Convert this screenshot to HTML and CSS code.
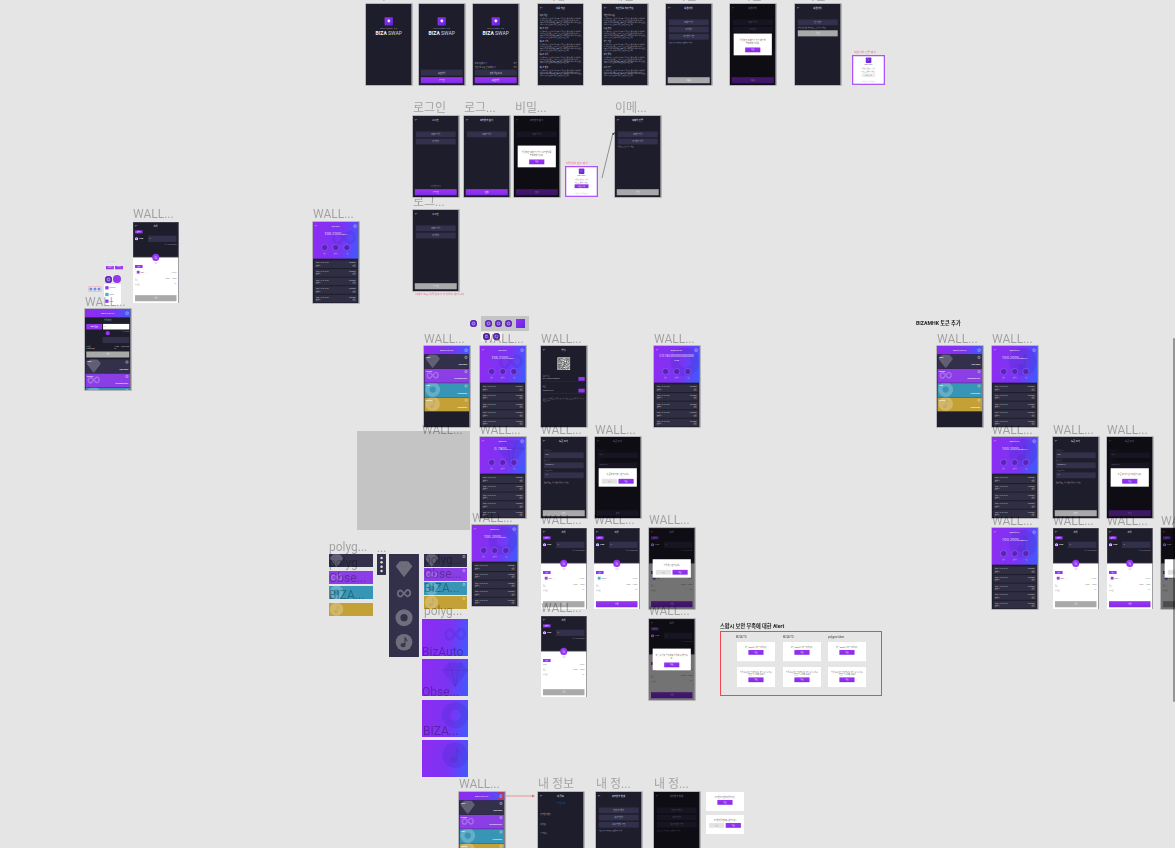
FILE: index.html
```html
<!DOCTYPE html>
<html lang="ko">
<head>
    <meta charset="UTF-8">
    <title>BIZA SWAP - Figma</title>
    <link rel="stylesheet" href="styles.css">
</head>
<body>
    <div class="canvas" id="canvas"></div>
    <div class="scrollbar"></div>
    <script src="script.js"></script>
</body>
</html>
```

FILE: styles.css
```css
* {
    box-sizing: border-box;
}
html, body {
    margin: 0;
    height: 100%;
    overflow: hidden;
    background: #e5e5e5;
}
body {
    font-family: Roboto, "Noto Sans CJK KR", sans-serif;
}
.canvas {
    position: relative;
    width: 1175px;
    height: 848px;
    overflow: hidden;
    filter: blur(0.3px);
}
.scrollbar {
    position: absolute;
    top: 338px;
    right: 0;
    width: 2px;
    height: 364px;
    border-radius: 1px;
    background: rgba(0, 0, 0, 0.35);
}

/* canvas items */
.frame {
    position: absolute;
    overflow: hidden;
}
.phone {
    box-shadow: 0 0 0 0.6px rgba(95, 95, 110, 0.6);
}
.phone.open {
    box-shadow: none;
}
.screen {
    position: relative;
    display: flex;
    flex-direction: column;
    overflow: hidden;
    transform: scale(0.1264);
    transform-origin: 0 0;
    font-size: 20px;
    color: #fff;
}
.label {
    position: absolute;
    font-size: 12px;
    line-height: 14px;
    white-space: nowrap;
    color: rgba(0, 0, 0, 0.3);
}
.note {
    position: absolute;
    white-space: nowrap;
    font-size: 2.4px;
    line-height: 3px;
    color: #555;
}
.note.pink {
    color: #ef6f8d;
    font-size: 2.8px;
}
.note.title {
    font-weight: 700;
    color: #222;
    font-size: 5.2px;
    line-height: 7px;
}
.note.sub {
    color: #444;
    font-size: 2.6px;
}
.redbox {
    position: absolute;
    left: 720px;
    top: 631px;
    width: 162px;
    height: 65px;
    border: 1px solid #f0484e;
}
.plain {
    position: absolute;
}
.grey-rect {
    background: #c4c4c4;
}
.toolbar {
    position: absolute;
    display: flex;
    align-items: center;
    gap: 3px;
}
.toolbar.grey {
    left: 481px;
    top: 316px;
    width: 48px;
    height: 15px;
    padding-left: 4px;
    background: #c4c4c4;
}
.toolbar.white {
    left: 481px;
    top: 332px;
    width: 21px;
    height: 9px;
    padding-left: 2px;
    background: #f2f2f2;
}
.dot {
    display: block;
    flex: none;
    width: 7px;
    height: 7px;
    border-radius: 50%;
    background: #7a33e0;
    box-shadow: inset 0 0 0 1.5px #5b27ad, inset 0 0 0 2.5px #a98af0;
}
.dot.big {
    width: 8px;
    height: 8px;
    background: #9435ef;
    box-shadow: none;
}
.dot.solo {
    position: absolute;
    left: 470px;
    top: 320px;
}
.dot.at {
    position: absolute;
}
.logo-square {
    display: block;
    flex: none;
    width: 9px;
    height: 9px;
    margin-left: 1px;
    background: linear-gradient(135deg, #9c2ff0, #5a2be0);
}
.canvas-lines {
    position: absolute;
    left: 0;
    top: 0;
    width: 1175px;
    height: 848px;
    pointer-events: none;
}

/* screen parts */
.dark {
    background: #1e1d2b;
}
.head {
    display: flex;
    flex: none;
    align-items: center;
    justify-content: space-between;
    height: 66px;
    padding: 0 16px;
    font-size: 18px;
    font-weight: 500;
    color: #dedde6;
}
.head.grad {
    background: linear-gradient(95deg, #8f2cf0, #7b34f4 60%, #3c5cff);
}
.head .gear {
    display: block;
    width: 22px;
    height: 22px;
    border: 4px solid #dcd6ff;
    border-radius: 5px;
}
.head .none {
    width: 22px;
}
.welcome {
    display: flex;
    flex-direction: column;
    align-items: center;
    padding-top: 105px;
}
.logo {
    display: flex;
    align-items: center;
    justify-content: center;
    width: 66px;
    height: 66px;
    border-radius: 6px;
    background: linear-gradient(135deg, #a32bee, #4f2bdd);
    font-size: 32px;
}
.welcome-to {
    margin-top: 16px;
    font-size: 15px;
    letter-spacing: 4px;
    color: #b5b4c2;
}
.brand {
    margin-top: 4px;
    font-size: 40px;
    line-height: 46px;
    font-weight: 400;
    white-space: nowrap;
    color: #d5d4de;
}
.brand b {
    font-weight: 700;
    color: #f2f2f2;
}
.bottom {
    display: flex;
    flex-direction: column;
    gap: 12px;
    width: 100%;
    margin-top: auto;
    padding: 0 14px 14px;
}
.btn {
    display: flex;
    flex: none;
    align-items: center;
    justify-content: center;
    height: 48px;
    font-size: 16px;
    background: #32304a;
    color: #dcdbe4;
}
.btn.purple {
    background: linear-gradient(180deg, #a032f2, #7c2fe8);
    color: #fff;
}
.btn.gray {
    background: #a9a9a9;
    color: #eee;
}
.btn.deep {
    background: #8a35dd;
}
.check {
    display: flex;
    justify-content: space-between;
    font-size: 14px;
    color: #bbb;
}
.check i {
    font-style: normal;
    color: #9f5cff;
}
.terms {
    padding: 0 14px;
    font-size: 11px;
    line-height: 15px;
    color: #b9b8c4;
}
.terms h4 {
    margin: 14px 0 8px;
    font-size: 15px;
    font-weight: 400;
    line-height: 20px;
    color: #dedde6;
}
.terms p {
    margin: 0;
}
.form {
    display: flex;
    flex-direction: column;
    gap: 11px;
    padding: 56px 22px 0;
}
.form.tight {
    padding-top: 34px;
}
.field {
    height: 46px;
    padding-top: 10px;
    font-size: 15px;
    text-align: center;
    background: #32304a;
    color: #b7b6c4;
}
.field.left {
    padding-left: 14px;
    text-align: left;
}
.field-label {
    margin-bottom: -6px;
    font-size: 12px;
    color: #7d7c8c;
}
.form-note {
    font-size: 13px;
    line-height: 18px;
    color: #aaa9b6;
}
.form-note.mark {
    margin-top: 14px;
}
.forgot {
    font-size: 14px;
    text-align: center;
    color: #7d7c8c;
}

/* dim + modal */
.dim {
    position: absolute;
    inset: 0;
    display: flex;
    align-items: center;
    justify-content: center;
    background: rgba(0, 0, 0, 0.55);
}
.modal {
    display: flex;
    flex-direction: column;
    align-items: center;
    gap: 20px;
    width: 302px;
    padding: 38px 20px 24px;
    background: #fff;
    font-size: 16px;
    line-height: 26px;
    text-align: center;
    color: #555;
}
.modal.fill {
    width: 100%;
    height: 100%;
    padding: 30px 20px 0;
    gap: 14px;
    font-size: 14px;
    line-height: 19px;
}
.modal-btns {
    display: flex;
    justify-content: center;
    gap: 12px;
    width: 100%;
}
.btn.small {
    flex: 0 1 120px;
    height: 38px;
    width: 120px;
    font-size: 13px;
}
.btn.light {
    background: #e3e3e3;
    color: #999;
}

/* wallet list */
.tokens {
    display: flex;
    flex-direction: column;
    gap: 3px;
    padding: 2px 4px;
}
.tokens.below {
    padding-top: 14px;
}
.token {
    position: relative;
    flex: none;
    height: 110px;
    padding: 12px 12px;
    overflow: hidden;
    font-size: 14px;
    font-weight: 500;
    background: #32304a;
}
.token.purple {
    background: #8b3ee6;
}
.token.teal {
    background: #3795b5;
}
.token.gold {
    background: #c3a137;
}
.token .art {
    position: absolute;
    left: 0;
    top: -14px;
    width: 130px;
    height: 130px;
}
.token .corner {
    position: absolute;
    right: 14px;
    top: 12px;
    width: 20px;
    height: 20px;
    border: 4px solid #e2e2e2;
    border-radius: 5px;
}
.token .amount {
    position: absolute;
    right: 14px;
    bottom: 24px;
    font-size: 14px;
}
.art {
    color: rgba(255, 255, 255, 0.24);
}
.art .inner {
    fill: rgba(0, 0, 0, 0.06);
}
.strip .art .inner {
    fill: #3a3948;
}

/* token detail */
.hero {
    position: relative;
    flex: none;
    height: 290px;
    overflow: hidden;
    background: linear-gradient(100deg, #8d2cf1, #7a34f4 60%, #3c5cff);
}
.hero .head {
    position: relative;
}
.hero .art {
    position: absolute;
    right: -10px;
    top: 0;
    width: 250px;
    height: 250px;
    color: rgba(60, 40, 190, 0.2);
}
.balance {
    position: relative;
    margin-top: 10px;
    font-size: 32px;
    font-weight: 400;
    white-space: nowrap;
    text-align: center;
    color: #e5dcff;
}
.balance small {
    font-size: 16px;
}
.balance.long {
    margin: 0 16px;
    white-space: normal;
    word-break: break-all;
    font-size: 22px;
    line-height: 28px;
}
.hero-btns {
    position: absolute;
    left: 0;
    right: 0;
    top: 176px;
    display: flex;
    justify-content: center;
    gap: 36px;
}
.hero-btn {
    width: 52px;
    font-size: 12px;
    text-align: center;
    color: #d9ccff;
}
.hero-btn i {
    display: block;
    width: 52px;
    height: 52px;
    margin-bottom: 8px;
    border: 3px solid #a88cff;
    border-radius: 50%;
    background: #5a22b8;
}
.rows {
    display: flex;
    flex-direction: column;
    gap: 8px;
    padding: 14px 10px;
}
.row {
    display: flex;
    flex: none;
    justify-content: space-between;
    height: 60px;
    padding: 9px 14px;
    font-size: 13px;
    line-height: 20px;
    background: #2f2e42;
    color: #cfced8;
}
.row div:last-child {
    text-align: right;
}

/* send */
.send-top {
    flex: none;
    height: 280px;
    box-shadow: inset 0 0 0 5px rgba(110, 110, 125, 0.55);
}
.send-body-top {
    padding: 0 16px;
}
.pill {
    display: block;
    width: 60px;
    height: 24px;
    font-size: 12px;
    line-height: 24px;
    text-align: center;
    background: #9435ef;
    color: #fff;
}
.send-row {
    display: flex;
    align-items: center;
    gap: 10px;
    margin-top: 18px;
    font-size: 14px;
}
.send-row i {
    display: block;
    width: 24px;
    height: 24px;
    border-radius: 50%;
    background: #9435ef;
    box-shadow: inset 0 0 0 7px #e9dcff;
}
.send-row .field {
    flex: 1;
    margin-left: 28px;
    height: 50px;
    padding-top: 14px;
}
.send-hint {
    margin-top: 8px;
    font-size: 11px;
    text-align: right;
    color: #8d8c9c;
}
.send-low {
    position: relative;
    display: flex;
    flex: 1;
    flex-direction: column;
    padding: 60px 16px 14px;
    background: #fff;
    color: #777;
    font-size: 13px;
}
.swap-circle {
    position: absolute;
    left: 50%;
    top: -28px;
    display: flex;
    align-items: center;
    justify-content: center;
    width: 56px;
    height: 56px;
    margin-left: -28px;
    border-radius: 50%;
    font-size: 24px;
    background: #9435ef;
    color: #fff;
}
.swap-name {
    position: absolute;
    left: 0;
    right: 0;
    top: 32px;
    text-align: center;
    font-size: 13px;
}
.pick {
    display: flex;
    align-items: center;
    justify-content: space-between;
    margin: 12px 0 22px;
    color: #999;
}
.pick b {
    display: flex;
    align-items: center;
    gap: 8px;
    padding: 8px 12px;
    font-weight: 500;
    border: 2px solid #eee;
    color: #777;
}
.pick b i {
    display: block;
    width: 22px;
    height: 22px;
    background: #8e3ee8;
}
.pick b i.teal {
    background: #3fb4c8;
}
.kv {
    display: flex;
    justify-content: space-between;
    margin-bottom: 22px;
    color: #888;
}
.send-low .btn {
    margin-top: auto;
}

/* qr */
.qr {
    display: block;
    flex: none;
    width: 100px;
    height: 100px;
    margin: 24px auto 30px;
    background: #fff;
}
.recv {
    display: flex;
    flex-direction: column;
    gap: 6px;
    padding: 0 14px 30px;
    font-size: 13px;
    color: #b7b6c4;
}
.recv-line {
    display: flex;
    align-items: center;
    justify-content: space-between;
    padding-bottom: 6px;
    border-bottom: 2px solid #44434f;
    font-size: 12px;
}
.recv-line span {
    width: 50px;
    height: 30px;
    background: #9435ef;
}
.recv-note {
    padding: 0 14px;
    font-size: 12px;
    line-height: 16px;
    color: #999;
}

/* my info */
.info {
    padding: 0 18px;
    font-size: 14px;
    color: #b7b6c4;
}
.info-top {
    padding: 16px 0 62px;
    text-align: center;
    color: #3a7ab0;
}
.info-row {
    display: flex;
    justify-content: space-between;
    height: 78px;
}

/* mail + alert cards */
.mail {
    align-items: center;
    padding: 10px 14px;
    background: #fff;
    border: 10px solid #a855f7;
    color: #777;
    font-size: 13px;
    line-height: 17px;
    text-align: center;
}
.mail .logo {
    flex: none;
    width: 44px;
    height: 44px;
    font-size: 20px;
}
.mail .mail-name {
    margin: 4px 0 16px;
    font-size: 12px;
    font-weight: 700;
}
.mail .btn {
    width: 110px;
    height: 30px;
    margin-top: 10px;
    font-size: 12px;
}
.mail .mail-foot {
    margin-top: auto;
    font-size: 10px;
    line-height: 12px;
    color: #bbb;
}
.mail.light .btn {
    background: #eee;
    color: #777;
}

/* standalone token art */
.card-art {
    position: relative;
    height: 100%;
    padding: 0;
    background: #32304a;
    overflow: hidden;
}
.card-art.purple {
    background: #8b3ee6;
}
.card-art.teal {
    background: #3795b5;
}
.card-art.gold {
    background: #c3a137;
}
.card-art .art {
    position: absolute;
    left: 0;
    top: -10px;
    width: 120px;
    height: 120px;
}
.card-art .corner {
    position: absolute;
    right: 14px;
    top: 10px;
    width: 20px;
    height: 20px;
    border: 4px solid #e2e2e2;
    border-radius: 5px;
}
.banner {
    position: relative;
    height: 100%;
    overflow: hidden;
    background: linear-gradient(100deg, #8d2cf1, #7a34f4 60%, #3c5cff);
}
.banner .art {
    position: absolute;
    right: -14px;
    top: 6px;
    width: 230px;
    height: 230px;
    color: rgba(60, 40, 190, 0.22);
}
.strip {
    display: flex;
    flex-direction: column;
    align-items: center;
    justify-content: space-around;
    height: 100%;
    padding: 20px 0;
    background: #32304a;
}
.strip .art {
    width: 150px;
    height: 150px;
    color: #6f6e7c;
}
.mini-strip {
    display: flex;
    flex-direction: column;
    align-items: center;
    justify-content: space-around;
    height: 100%;
    padding: 14px 0;
    background: #32304a;
}
.mini-strip i {
    display: block;
    width: 20px;
    height: 20px;
    border-radius: 50%;
    background: #ddd;
}
.dropdown {
    display: flex;
    flex-direction: column;
    justify-content: space-around;
    height: 100%;
    padding: 4px 10px;
    background: #fff;
    color: #777;
    font-size: 14px;
}
.dropdown div {
    display: flex;
    align-items: center;
    gap: 6px;
}
.dropdown i {
    display: block;
    width: 26px;
    height: 26px;
    background: #8e3ee8;
}
.dropdown i.teal {
    background: #3fb4c8;
}
.pink-box {
    display: flex;
    align-items: center;
    justify-content: center;
    gap: 8px;
    height: 100%;
    border: 5px solid #f0a3b4;
    border-radius: 14px;
    background: #ebe4ee;
}
.pink-box i {
    display: block;
    width: 24px;
    height: 24px;
    border-radius: 50%;
    background: #6a8fe0;
}
.pair {
    display: flex;
    gap: 10px;
    height: 100%;
}
.pair span {
    flex: 1;
    background: #9435ef;
    font-size: 14px;
    line-height: 28px;
    text-align: center;
}
.swap-form {
    flex: none;
    padding: 0 10px;
}
.swap-head {
    height: 52px;
    padding-top: 14px;
    font-size: 15px;
    text-align: center;
    color: #ccc;
}
.swap-in {
    display: flex;
    height: 44px;
    gap: 8px;
}
.swap-in b {
    flex: 0 0 125px;
    font-size: 13px;
    font-weight: 500;
    line-height: 44px;
    text-align: center;
    background: #9435ef;
}
.swap-in span {
    flex: 1;
    padding: 12px;
    font-size: 13px;
    background: #fff;
    color: #777;
}
.swap-hint {
    height: 26px;
    padding-top: 6px;
    font-size: 11px;
    text-align: right;
    color: #8d8c9c;
}
.swap-dot {
    display: block;
    width: 34px;
    height: 34px;
    margin: -14px auto 0;
    border-radius: 50%;
    background: #9435ef;
}
.swap-out {
    display: block;
    width: 62%;
    height: 48px;
    margin: 14px 0 0 auto;
    background: #32304a;
}
.swap-rate {
    display: flex;
    justify-content: space-between;
    margin: 16px 0 14px;
    font-size: 12px;
    line-height: 18px;
    color: #bbb;
}
```

FILE: script.js
```js
const S = 0.1264;
const canvas = document.getElementById('canvas');

// 토큰 아트
const ART = {
    diamond: '<path fill="currentColor" d="M28 10h44l22 26-44 58L6 36z"/><path fill="none" stroke="rgba(0,0,0,.12)" stroke-width="2" d="M6 36h88M28 10l12 26 10 58 10-58 12-26"/>',
    link: '<path fill="none" stroke="currentColor" stroke-width="9" d="M50 50 34 34a17 17 0 1 0 0 34l16-18 16-18a17 17 0 1 1 0 34z"/>',
    ring: '<circle cx="50" cy="50" r="32" fill="none" stroke="currentColor" stroke-width="26"/>',
    note: '<circle cx="50" cy="50" r="44" fill="currentColor"/><path class="inner" d="M52 24h6c2 10 12 12 12 24-4-6-8-8-12-9v27a13 11 0 1 1-6-10z"/>'
};
function art(kind) {
    return `<svg class="art" viewBox="0 0 100 100">${ART[kind]}</svg>`;
}

function head(title, opts = {}) {
    const left = opts.noBack ? '<span class="none"></span>' : '<span>←</span>';
    const right = opts.gear ? '<span class="gear"></span>' : '<span class="none"></span>';
    return `<div class="head ${opts.grad ? 'grad' : ''}">${left}<span>${title}</span>${right}</div>`;
}

function buttons(two) {
    return two
        ? '<div class="modal-btns"><span class="btn small light">취소</span><span class="btn small purple">확인</span></div>'
        : '<div class="modal-btns"><span class="btn small purple">확인</span></div>';
}
function modal(text, two) {
    return `<div class="dim"><div class="modal"><div>${text}</div>${buttons(two)}</div></div>`;
}

function welcome(step) {
    let bottom = '';
    if (step >= 1) {
        const check = step === 2
            ? '<div class="check"><span>이용 약관에 <i>동의</i></span><span>보기</span></div><div class="check"><span>개인정보 수집 및 이용에 <i>동의</i></span><span>보기</span></div>'
            : '';
        bottom = `<div class="bottom">${check}<div class="btn">${step === 2 ? '전체 약관 동의' : '회원가입'}</div><div class="btn purple">${step === 2 ? '회원가입' : '로그인'}</div></div>`;
    }
    return `<div class="welcome"><div class="logo">♦</div><div class="welcome-to">WELCOME TO</div><div class="brand"><b>BIZA</b> SWAP</div></div>${bottom}`;
}

const TERM = '본 약관은 비자스왑 서비스의 이용 조건과 절차, 회사와 회원 사이의 권리와 의무 및 책임 사항을 규정하는 것을 목적으로 합니다. 회원은 서비스를 이용하기 전에 약관의 내용을 충분히 확인해야 합니다. 회사는 관련 법령을 위반하지 않는 범위에서 약관을 개정할 수 있습니다.';
function terms(title, heads) {
    const body = heads.map(h => `<h4>${h}</h4><p>${TERM}</p>`).join('');
    return `${head(title)}<div class="terms">${body}</div>`;
}

function form(title, fields, btn, o = {}) {
    const inputs = fields.map(f => `<div class="field">${f}</div>`).join('');
    const forgot = o.forgot ? '<div class="bottom"><div class="forgot">비밀번호 찾기</div><div class="btn purple">로그인</div></div>' : '';
    const note = o.note ? `<div class="form-note">${o.note}</div>` : '';
    let button = '';
    if (o.inlineBtn) button = `<div class="btn gray">${btn}</div>`;
    const bottom = (!o.forgot && !o.inlineBtn) ? `<div class="bottom"><div class="btn ${o.btnClass || 'gray'}">${btn}</div></div>` : forgot;
    let dim = '';
    if (o.modal) dim = modal(o.modal, o.two);
    if (o.dimOnly) dim = '<div class="dim"></div>';
    return `${head(title)}<div class="form">${inputs}${note}${button}</div>${bottom}${dim}`;
}

function tokenForm(o = {}) {
    const f = (label, val) => `<div class="field-label">${label}</div><div class="field left">${val}</div>`;
    const btn = o.modal ? (o.btnClass || '') : 'gray';
    return `${head('토큰 추가')}<div class="form tight">${f('컨트랙트 주소', '0x8')}${f('토큰 심볼', 'BIZAMHK')}${f('소수점 자리수', '18')}<div class="form-note mark">토큰 정보를 다시 한번 확인해 주세요</div></div>
        <div class="bottom"><div class="btn ${btn}">추가</div></div>${o.modal ? modal(o.modal, o.two) : ''}`;
}

function tokenCard(cls, kind, name, amount) {
    return `<div class="token ${cls}">${art(kind)}${name}<span class="corner"></span><span class="amount">${amount}</span></div>`;
}
function wallet() {
    return `${head('BIZAUTOPAY', { grad: true, noBack: true, gear: true })}<div class="tokens">
        ${tokenCard('', 'diamond', 'OBSE', '1,000 OBSE')}
        ${tokenCard('purple', 'link', 'polygon', '100.0000 MATIC')}
        ${tokenCard('teal', 'ring', 'BIZA', '0.0000 BIZA')}
        ${tokenCard('gold', 'note', 'BizAuto', '0.0000 BIZA')}
    </div>`;
}

function rows(n) {
    let out = '';
    for (let i = 0; i < n; i++) {
        out += '<div class="row"><div>2021.12.15 13:24<br>보내기</div><div>100.0000<br>완료</div></div>';
    }
    return `<div class="rows">${out}</div>`;
}
function detail(title, kind, amount, unit, long) {
    return `<div class="hero">${art(kind)}${head(title, { gear: true })}
        <div class="balance ${long ? 'long' : ''}">${amount}<small>${unit}</small></div>
        <div class="hero-btns"><div class="hero-btn"><i></i>받기</div><div class="hero-btn"><i></i>보내기</div><div class="hero-btn"><i></i>스왑</div></div>
    </div>${rows(5)}`;
}

function send(o = {}) {
    const name = o.plainPick ? '<span>BIZA</span>' : `<b><i class="${o.teal ? 'teal' : ''}"></i>${o.teal ? 'MATIC' : 'BIZA'} ⌄</b>`;
    const dim = o.modal ? modal(o.modal, o.two) : '';
    return `<div class="dark send-top">${head('스왑')}<div class="send-body-top">
            <span class="pill">보내기</span>
            <div class="send-row"><i></i>${o.from || 'BIZA'}<div class="field left">0</div></div>
            <div class="send-hint">잔액 100.0000 BIZA</div>
        </div></div>
        <div class="send-low"><span class="swap-circle">⇅</span><div class="swap-name">스왑</div>
            <span class="pill">받기</span>
            <div class="pick">${name}<span>0.0000</span></div>
            <div class="kv"><span>환율</span><span>1 BIZA = 1 OBSE</span></div>
            <div class="kv"><span>수수료</span><span>0%</span></div>
            <div class="btn ${o.dark || o.active ? 'purple' : 'gray'}">스왑</div>
        </div>${dim}`;
}

function qrSvg() {
    let cells = '';
    let seed = 12345;
    for (let y = 0; y < 25; y++) {
        for (let x = 0; x < 25; x++) {
            seed = (seed * 1103515245 + 12345) % 2147483648;
            const corner = (x < 7 && y < 7) || (x > 17 && y < 7) || (x < 7 && y > 17);
            let on = Math.floor(seed / 65536) % 2 === 1;
            if (corner) {
                const dx = x > 17 ? x - 18 : x;
                const dy = y > 17 ? y - 18 : y;
                on = dx === 0 || dx === 6 || dy === 0 || dy === 6 || (dx > 1 && dx < 5 && dy > 1 && dy < 5);
            }
            if (on) cells += `<rect x="${x}" y="${y}" width="1" height="1"/>`;
        }
    }
    return `<svg class="qr" viewBox="-1 -1 27 27">${cells}</svg>`;
}
function receive() {
    return `${head('받기')}${qrSvg()}
        <div class="recv"><div>입금 주소</div><div class="recv-line">0x71c7656ec7ab88b098<span></span></div></div>
        <div class="recv"><div>메모</div><div class="recv-line">bizaswap12345<span></span></div></div>
        <div class="recv-note">입금 주소와 메모를 정확히 입력해 주세요. 잘못 입력한 경우 복구가 어렵습니다.</div>`;
}

function swapWallet() {
    return `${head('BIZAUTOPAY', { grad: true, noBack: true, gear: true })}<div class="swap-form">
        <div class="swap-head">스왑 하기</div>
        <div class="swap-in"><b>BIZA 토큰</b><span>0</span></div>
        <div class="swap-hint">잔액 0.0000</div><span class="swap-dot"></span><span class="swap-out"></span>
        <div class="swap-rate"><span>수수료<br>0.0000 BIZA</span><span>1 BIZA = 1.0000 OBSE<br>0%</span></div>
        <div class="btn gray">스왑</div></div><div class="tokens below">
        ${tokenCard('', 'diamond', 'OBSE', '1,000 OBSE')}${tokenCard('purple', 'link', 'polygon', '100.0000 MATIC')}${tokenCard('teal', 'ring', 'BIZA', '0.0000 BIZA')}
    </div>`;
}

function myInfo() {
    return `${head('내 정보')}<div class="info"><div class="info-top">로그인 정보</div>
        <div class="info-row"><span>비밀번호 변경</span><span>›</span></div>
        <div class="info-row"><span>내 지갑</span><span>›</span></div>
        <div class="info-row"><span>로그아웃</span><span>›</span></div></div>`;
}

function mail() {
    return `<div class="logo">♦</div><div class="mail-name">BIZA SWAP</div>
        <div>이메일 인증을 위해<br>버튼을 눌러 주세요.</div><div class="btn purple">이메일 인증</div><div class="mail-foot">본 메일은 발신 전용입니다.</div>`;
}

function alertCard(text, two) {
    return `<div class="modal fill"><div>${text}</div>${buttons(two)}</div>`;
}

function place(x, y, w, h, html, cls = '', screenCls = '') {
    canvas.insertAdjacentHTML('beforeend',
        `<div class="frame ${cls}" style="left:${x}px;top:${y}px;width:${w}px;height:${h}px"><div class="screen ${screenCls}" style="width:${w / S}px;height:${h / S}px">${html}</div></div>`);
}
function phone(x, y, html, extra = '') {
    place(x, y, 45.5, 81, html, `phone ${extra}`, 'dark');
}
function label(x, y, text) {
    canvas.insertAdjacentHTML('beforeend', `<div class="label" style="left:${x}px;top:${y}px">${text}</div>`);
}
function note(x, y, text, cls = '') {
    canvas.insertAdjacentHTML('beforeend', `<div class="note ${cls}" style="left:${x}px;top:${y}px">${text}</div>`);
}

// 회색 사각형은 다른 프레임 아래에 깔림
canvas.insertAdjacentHTML('beforeend', '<div class="plain grey-rect" style="left:357px;top:431px;width:113px;height:99px"></div>');

// 상단 줄
[[375, '회'], [428, '로그'], [482, '로그'], [545, '이용'], [612, '개인'], [675, '회원'], [740, '회원'], [804, '회원']].forEach(l => label(l[0], -11, l[1]));
phone(366, 4, welcome(0));
phone(419, 4, welcome(1));
phone(473, 4, welcome(2));
phone(537.5, 4, terms('이용 약관', ['이용 약관', '제1조 목적', '제2조 정의', '제3조 효력', '제4조 변경']));
phone(602, 4, terms('개인정보 처리 방침', ['개인정보 수집', '수집 항목', '보유 기간', '파기 절차', '동의 거부']));
phone(666, 4, form('회원가입', ['이메일 입력', '비밀번호', '비밀번호 확인'], '다음', { note: '영문, 숫자, 특수문자 포함 8자 이상' }));
phone(730, 4, form('회원가입', ['이메일 입력', '비밀번호', '비밀번호 확인'], '다음', { btnClass: 'purple', modal: '입력하신 이메일로 인증 메일을<br>발송하였습니다.' }));
phone(795, 4, form('회원가입', ['인증 번호'], '확인', { note: '이메일로 받은 인증 번호를 입력해 주세요', inlineBtn: true }));
note(854, 51, '회원가입 인증 메일', 'pink');
place(852, 55, 33, 30, mail(), '', 'mail light');

// 로그인
label(413, 101, '로그인');
label(464, 101, '로그...');
label(515, 101, '비밀...');
label(615, 101, '이메...');
phone(413, 116, form('로그인', ['이메일 입력', '비밀번호'], '로그인', { forgot: true }));
phone(464, 116, form('비밀번호 찾기', ['이메일 입력'], '전송', { btnClass: 'purple' }));
phone(514, 116, form('비밀번호 찾기', ['이메일 입력'], '전송', { btnClass: 'purple', modal: '입력하신 이메일로 임시 비밀번호를<br>발송하였습니다.' }));
note(566, 162, '비밀번호 찾기 메일', 'pink');
place(565, 166, 33, 31, mail(), '', 'mail');
phone(615, 116, form('이메일 인증', ['이메일 입력', '비밀번호 입력'], '확인', { note: '이메일을 입력해 주세요' }));
label(413, 195, '로그...');
phone(413, 210, form('로그인', ['이메일 입력', '비밀번호'], '로그인'));
note(415, 293, '이메일 또는 비밀번호가 일치하지 않습니다', 'pink');

// 왼쪽
label(133, 207, 'WALL...');
label(313, 207, 'WALL...');
phone(133, 222, send(), 'open');
phone(313, 222, detail('polygon', 'link', '100.2000', 'MATIC'));
note(107, 260, '. . . . . . . .');
place(106, 266, 17, 3.5, '<div class="pair"><span>보내기</span><span>받기</span></div>');
canvas.insertAdjacentHTML('beforeend', '<span class="dot at" style="left:105px;top:276px"></span><span class="dot big at" style="left:113px;top:275px"></span>');
place(88, 286, 14, 6, '<div class="pink-box"><i></i><i></i><i></i></div>');
place(104, 284, 17, 21, '<div class="dropdown"><div><i></i>polygon</div><div><i class="teal"></i>OBSE</div><div><i></i>BIZA</div></div>');
label(85, 295, 'WALL...');
phone(85, 309, swapWallet());

// 툴바
canvas.insertAdjacentHTML('beforeend', `<span class="dot solo"></span>
    <div class="toolbar grey"><span class="dot"></span><span class="dot"></span><span class="dot"></span><span class="logo-square"></span></div>
    <div class="toolbar white"><span class="dot"></span><span class="dot"></span></div>`);

// 가운데 지갑
label(424, 332, 'WALL...');
label(480, 332, '&nbsp;WALL...');
label(541, 332, 'WALL...');
label(654, 332, 'WALL...');
phone(424, 346, wallet());
phone(480, 346, detail('polygon', 'link', '105.2000', 'MATIC'));
phone(541, 346, receive());
phone(654, 346, detail('BizAutoPay', 'ring', '010.180.000000000000000', '<br>BIZA', true));
label(422, 423, 'WALL...');
label(480, 423, 'WALL...');
label(541, 423, 'WALL...');
label(595, 423, 'WALL...');
phone(480, 437, detail('BizAuto', 'diamond', '0.7800', 'MHK'));
phone(541, 437, tokenForm());
phone(595, 437, tokenForm({ modal: '토큰을 추가하시겠습니까?', two: true }));

// 카드 묶음
label(329, 540, 'polyg...');
label(377, 541, '...');
place(329, 554, 44, 13, '<div class="card-art">' + art('diamond') + '</div>');
place(329, 571, 44, 13, '<div class="card-art purple">' + art('link') + '</div>');
place(329, 586, 44, 13, '<div class="card-art teal">' + art('ring') + '</div>');
place(329, 603, 44, 13, '<div class="card-art gold">' + art('note') + '</div>');
label(329, 556, 'polyg');
label(329, 571, 'Obse...');
label(329, 588, 'BIZA...');
place(377, 554, 9, 21, '<div class="mini-strip"><i></i><i></i><i></i><i></i></div>');
place(389, 554, 30, 103, '<div class="strip">' + art('diamond') + art('link') + art('ring') + art('note') + '</div>');
place(424, 554, 43, 13, '<div class="card-art">' + art('diamond') + '<span class="corner"></span></div>');
place(424, 568, 43, 13, '<div class="card-art purple">' + art('link') + '<span class="corner"></span></div>');
place(424, 582, 43, 13, '<div class="card-art teal">' + art('ring') + '<span class="corner"></span></div>');
place(424, 596, 43, 13, '<div class="card-art gold">' + art('note') + '<span class="corner"></span></div>');
label(424, 553, 'polyg...');
label(424, 567, 'Obse...');
label(424, 581, 'BIZA...');
label(424, 604, 'polyg...');
place(422, 619, 46, 37, '<div class="banner">' + art('link') + '</div>');
place(422, 659, 46, 37, '<div class="banner">' + art('diamond') + '</div>');
place(422, 700, 46, 37, '<div class="banner">' + art('ring') + '</div>');
place(422, 740, 46, 37, '<div class="banner">' + art('note') + '</div>');
label(422, 645, 'BizAuto');
label(422, 685, 'Obse...');
label(423, 724, 'BIZA...');

// 스왑
label(472, 511, 'WALL...');
label(541, 513, 'WALL...');
label(594, 513, 'WALL...');
label(649, 513, 'WALL...');
phone(472, 525, detail('Obsesen', 'ring', '100.2000', 'OBSE'));
phone(541, 528, send(), 'open');
phone(594, 528, send({ teal: true, active: true }), 'open');
phone(649, 528, send({ dark: true, modal: '스왑 하시겠습니까?', two: true }));
label(541, 601, 'WALL...');
label(649, 604, 'WALL...');
phone(541, 616, send({ plainPick: true }), 'open');
phone(649, 619, send({ dark: true, modal: '보유 수량이 부족하여 스왑할 수 없습니다.' }));

// 알림 모음
note(720, 623, '스왑시 보안 부족에 대한 Alert', 'title');
canvas.insertAdjacentHTML('beforeend', '<div class="redbox"></div>');
['BIZAUTO', 'BIZAUTO', 'polygon/obse'].forEach((t, i) => note([736, 783, 828][i], 636, t, 'sub'));
[737, 783, 828].forEach(x => {
    place(x, 642, 38, 19.5, alertCard('보유 BIZA 수량이 부족합니다.'));
    place(x, 667, 38, 20, alertCard('스왑 수수료가 부족합니다. 보유 수량을 다시 확인한 후 시도해 주세요.'));
});

// 오른쪽
note(916, 320, 'BIZAMHK 토큰 추가', 'title');
label(937, 332, 'WALL...');
label(992, 332, 'WALL...');
phone(937, 346, wallet());
phone(992, 346, detail('BIZAMHK', 'note', '100.2000', 'BIZAMHK'));
label(992, 423, 'WALL...');
label(1053, 423, 'WALL...');
label(1107, 423, 'WALL...');
phone(992, 437, detail('BIZAMHK', 'note', '100.2000', 'BIZAMHK'));
phone(1053, 437, tokenForm());
phone(1107, 437, tokenForm({ modal: '토큰 추가가 완료되었습니다.', btnClass: 'deep' }));
label(992, 514, 'WALL...');
label(1053, 514, 'WALL...');
label(1107, 514, 'WALL...');
label(1161, 514, 'WALL...');
phone(992, 528, detail('BIZAMHK', 'note', '100.2000', 'BIZAMHK'));
phone(1053, 528, send(), 'open');
phone(1107, 528, send({ active: true }), 'open');
phone(1161, 528, send({ modal: '스왑 하시겠습니까?', two: true }));

// 하단
label(459, 777, 'WALL...');
label(538, 777, '내 정보');
label(596, 777, '내 정...');
label(654, 777, '내 정...');
phone(459, 792, wallet());
phone(538, 792, myInfo());
phone(596, 792, form('비밀번호 변경', ['현재 비밀번호', '새 비밀번호', '새 비밀번호 확인'], '변경', { note: '영문, 숫자, 특수문자 포함 8자 이상' }));
phone(654, 792, form('비밀번호 변경', ['현재 비밀번호', '새 비밀번호', '새 비밀번호 확인'], '변경', { dimOnly: true, note: '영문, 숫자, 특수문자 포함 8자 이상' }));
place(706, 792, 38, 19, alertCard('비밀번호가 변경되었습니다.'));
place(706, 815, 38, 19, alertCard('비밀번호를 변경하시겠습니까?', true));

// 연결선
canvas.insertAdjacentHTML('beforeend', `<svg class="canvas-lines" viewBox="0 0 1175 848">
    <path d="M602 178 613 133" fill="none" stroke="#555" stroke-width=".6"/><path d="M615 132l-3 2 2 1z" fill="#333"/>
    <path d="M504 796h30" fill="none" stroke="#e8707a" stroke-width=".7"/><path d="M535 796l-3-1.5v3z" fill="#e8707a"/>
    <rect x="497.5" y="792.5" width="5" height="6" fill="none" stroke="#d4333a" stroke-width=".8"/>
</svg>`);
```
